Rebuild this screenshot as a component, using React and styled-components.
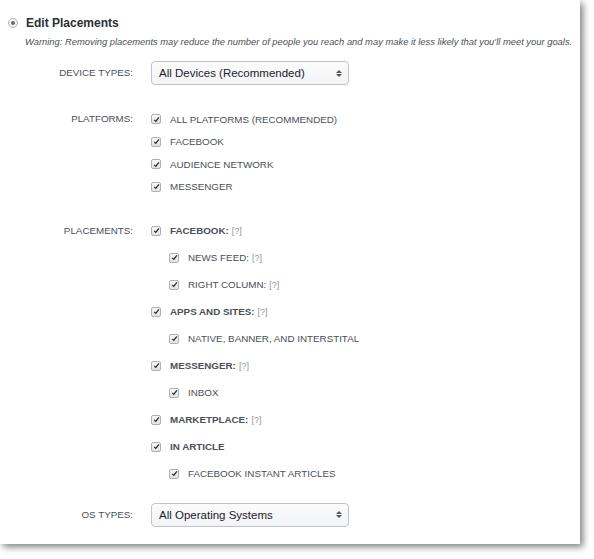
import React from 'react'
import styled, { createGlobalStyle } from 'styled-components'

const GlobalStyle = createGlobalStyle`
  html, body {
    margin: 0;
    min-height: 559px;
    background: #fff;
    font-family: "Liberation Sans", Arial, sans-serif;
    color: #4b4f56;
  }
`

const Page = styled.div`
  padding-bottom: 15px;
`

const Panel = styled.div`
  width: 580px;
  height: 544px;
  box-sizing: border-box;
  background: #fff;
  box-shadow: 3px 3px 7px rgba(0, 0, 0, 0.5);
  padding: 17px 0 0 8px;
`

const Header = styled.div`
  display: flex;
  align-items: center;
  gap: 8px;
  height: 11px;
`

const Radio = styled.span`
  width: 8px;
  height: 8px;
  border-radius: 50%;
  border: 1px solid #b4b4b4;
  background: #f2f2f2;
  display: flex;
  align-items: center;
  justify-content: center;
  box-sizing: content-box;

  &::after {
    content: '';
    width: 4px;
    height: 4px;
    border-radius: 50%;
    background: #6a6a6a;
  }
`

const Title = styled.h2`
  margin: 0;
  font-size: 12px;
  font-weight: bold;
  color: #2c2f34;
`

const Warning = styled.p`
  margin: 8px 0 0 17px;
  font-size: 9.4px;
  font-style: italic;
  color: #4b4f56;
  white-space: nowrap;
  line-height: 12px;
`

const Field = styled.div`
  display: grid;
  grid-template-columns: 125px 1fr;
  column-gap: 18px;
  align-items: start;
  margin-top: ${p => p.$top}px;
`

const Label = styled.div`
  text-align: right;
  font-size: 9.8px;
  text-transform: uppercase;
  color: #4b4f56;
  line-height: ${p => p.$line}px;
`

const SelectBox = styled.div`
  width: 198px;
  height: 24px;
  box-sizing: border-box;
  border: 1px solid #bfc3c9;
  border-radius: 4px;
  background: linear-gradient(#fbfbfb, #f3f4f6);
  display: flex;
  align-items: center;
  justify-content: space-between;
  padding: 0 6px 0 7px;
  font-size: 11.5px;
  color: #1d2129;
`

const Arrows = styled.span`
  display: flex;
  flex-direction: column;
  gap: 1px;

  &::before,
  &::after {
    content: '';
    border-left: 3px solid transparent;
    border-right: 3px solid transparent;
  }
  &::before {
    border-bottom: 3.5px solid #555;
  }
  &::after {
    border-top: 3.5px solid #555;
  }
`

const List = styled.div`
  display: flex;
  flex-direction: column;
`

const Row = styled.div`
  display: flex;
  align-items: center;
  height: ${p => p.$h}px;
  padding-left: ${p => (p.$nested ? 18 : 0)}px;
  gap: 9px;
  font-size: 9.8px;
  text-transform: uppercase;
  color: #4b4f56;
  font-weight: ${p => (p.$bold ? 'bold' : 'normal')};
`

const Box = styled.span`
  width: 8px;
  height: 8px;
  border: 1px solid #b0b0b0;
  border-radius: 2px;
  background: linear-gradient(#f8f8f8, #e2e2e2);
  display: flex;
  align-items: center;
  justify-content: center;
  flex: none;
`

const Help = styled.span`
  font-size: 9px;
  font-weight: normal;
  color: #90949c;
  margin-left: 3px;
`

const Check = () => (
  <Box>
    <svg width="7" height="7" viewBox="0 0 7 7">
      <path d="M1.2 3.9 L2.8 5.4 L5.9 1.3" fill="none" stroke="#2a2a2a" strokeWidth="1.3" />
    </svg>
  </Box>
)

const platforms = ['All Platforms (Recommended)', 'Facebook', 'Audience Network', 'Messenger']

const placements = [
  { text: 'Facebook:', bold: true, help: true },
  { text: 'News Feed:', nested: true, help: true },
  { text: 'Right Column:', nested: true, help: true },
  { text: 'Apps and Sites:', bold: true, help: true },
  { text: 'Native, Banner, and Interstital', nested: true },
  { text: 'Messenger:', bold: true, help: true },
  { text: 'Inbox', nested: true },
  { text: 'Marketplace:', bold: true, help: true },
  { text: 'In Article', bold: true },
  { text: 'Facebook Instant Articles', nested: true },
]

const App = () => (
  <Page>
    <GlobalStyle />
    <Panel>
      <Header>
        <Radio />
        <Title>Edit Placements</Title>
      </Header>
      <Warning>
        Warning: Removing placements may reduce the number of people you reach and may make it less likely that you'll meet your goals.
      </Warning>

      <Field $top={13}>
        <Label $line={24}>Device Types:</Label>
        <SelectBox>
          All Devices (Recommended)
          <Arrows />
        </SelectBox>
      </Field>

      <Field $top={23}>
        <Label $line={22.5}>Platforms:</Label>
        <List>
          {platforms.map(p => (
            <Row key={p} $h={22.5}>
              <Check />
              {p}
            </Row>
          ))}
        </List>
      </Field>

      <Field $top={19}>
        <Label $line={27}>Placements:</Label>
        <List>
          {placements.map(p => (
            <Row key={p.text} $h={27} $bold={p.bold} $nested={p.nested}>
              <Check />
              <span>
                {p.text}
                {p.help && <Help>[?]</Help>}
              </span>
            </Row>
          ))}
        </List>
      </Field>

      <Field $top={15.5}>
        <Label $line={24}>OS Types:</Label>
        <SelectBox>
          All Operating Systems
          <Arrows />
        </SelectBox>
      </Field>
    </Panel>
  </Page>
)

export default App
